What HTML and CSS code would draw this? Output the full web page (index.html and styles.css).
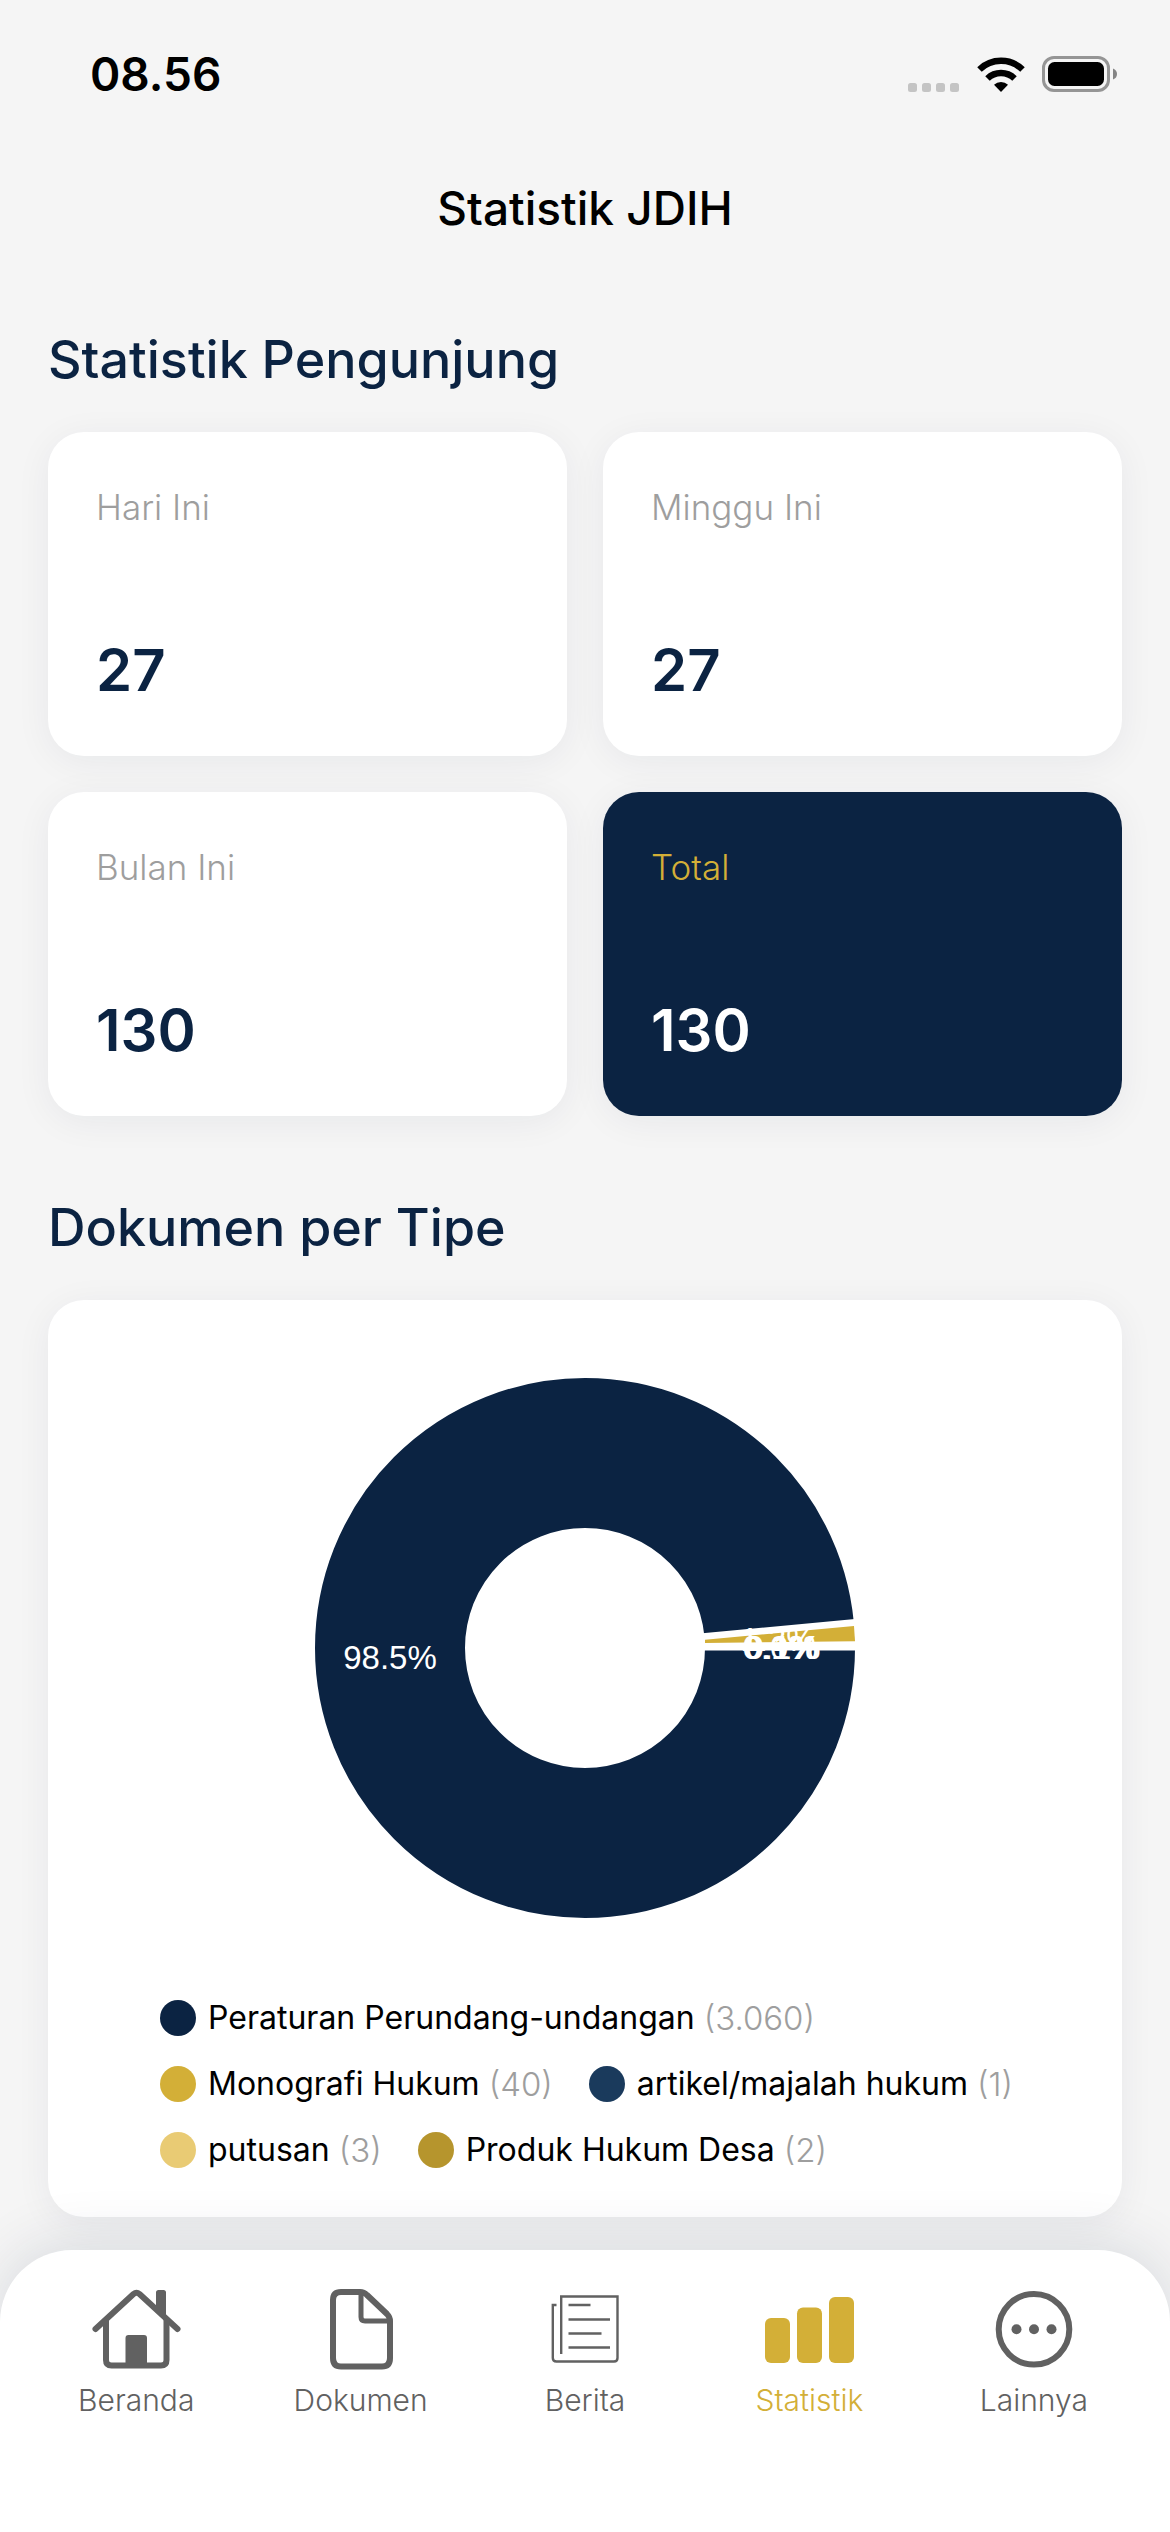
FILE: index.html
```html
<!DOCTYPE html>
<html lang="id">
<head>
    <meta charset="UTF-8">
    <meta name="viewport" content="width=device-width, initial-scale=1.0">
    <title>Statistik JDIH</title>
    <link rel="stylesheet" href="styles.css">
</head>
<body>
    <div class="status-bar">
        <span class="time">08.56</span>
        <div class="status-icons">
            <svg width="52" height="36" viewBox="0 0 52 36" fill="#c4c4c4">
                <rect x="0" y="27" width="9" height="9" rx="2.5"/>
                <rect x="14" y="27" width="9" height="9" rx="2.5"/>
                <rect x="28" y="27" width="9" height="9" rx="2.5"/>
                <rect x="42" y="27" width="9" height="9" rx="2.5"/>
            </svg>
            <svg width="48" height="36" viewBox="0 0 48 36">
                <path d="M2.5 13.5A31 31 0 0 1 45.500 13.500" fill="none" stroke="#000" stroke-width="6.500"/>
                <path d="M10.500 22.500A19.500 19.500 0 0 1 37.500 22.500" fill="none" stroke="#000" stroke-width="6.500"/>
                <path d="M24 36L17 28.800A10 10 0 0 1 31 28.800Z"/>
            </svg>
            <svg width="76" height="36" viewBox="0 0 76 36">
                <rect x="1.500" y="1.500" width="65" height="33" rx="10.500" fill="none" stroke="#959595" stroke-width="3"/>
                <rect x="6" y="6" width="56" height="24" rx="6.500"/>
                <path d="M71 12.500Q75 14 75 18T71 23.500Z" fill="#858585"/>
            </svg>
        </div>
    </div>

    <header class="app-header">
        <h1>Statistik JDIH</h1>
    </header>

    <main>
        <section>
            <h2>Statistik Pengunjung</h2>
            <div class="stats">
                <div class="card stat">
                    <span class="stat-label">Hari Ini</span>
                    <span class="stat-value">27</span>
                </div>
                <div class="card stat">
                    <span class="stat-label">Minggu Ini</span>
                    <span class="stat-value">27</span>
                </div>
                <div class="card stat">
                    <span class="stat-label">Bulan Ini</span>
                    <span class="stat-value">130</span>
                </div>
                <div class="card stat stat-total">
                    <span class="stat-label">Total</span>
                    <span class="stat-value">130</span>
                </div>
            </div>
        </section>

        <section>
            <h2>Dokumen per Tipe</h2>
            <div class="card chart-card">
                <svg class="donut" viewBox="-270 -270 540 540">
                    <circle r="195" fill="none" stroke="#0b2342" stroke-width="150"/>
                    <!-- gaps between the small slices -->
                    <path d="M112 -14.200L275 -29.500V2.500H112Z" fill="#fff"/>
                    <path d="M120 -8.300L269 -22L270 -6.700L120 -5Z" fill="#d3af37"/>
                    <text x="-195" y="21">98.5%</text>
                    <text x="193" y="3">1.3%</text>
                    <text x="195" y="11">0.0%</text>
                    <text x="196" y="11">0.1%</text>
                    <text x="198" y="11">0.1%</text>
                </svg>
                <ul class="legend">
                    <li><i class="dot navy"></i>Peraturan Perundang-undangan <span>(3.060)</span></li>
                    <li><i class="dot gold"></i>Monografi Hukum <span>(40)</span></li>
                    <li><i class="dot blue"></i>artikel/majalah hukum <span>(1)</span></li>
                    <li><i class="dot sand"></i>putusan <span>(3)</span></li>
                    <li><i class="dot bronze"></i>Produk Hukum Desa <span>(2)</span></li>
                </ul>
            </div>
        </section>
    </main>

    <nav class="tab-bar">
        <a href="#beranda">
            <svg width="96" height="88" viewBox="0 0 96 88" fill="none" stroke="currentColor" stroke-width="6" stroke-linecap="round" stroke-linejoin="round">
                <path d="M7.500 45L45.500 10Q48.500 7.500 51.500 10L89.500 45"/>
                <path d="M18 35V76Q18 81.500 23.500 81.500H73Q78.500 81.500 78.500 76V35" stroke-linecap="butt"/>
                <path d="M37.500 83V54Q37.500 51 40.500 51H56Q59 51 59 54V83ZM68 26V8.500Q68 6 70.500 6H75.500Q78 6 78 8.500V34Z" fill="currentColor" stroke="none"/>
            </svg>
            Beranda
        </a>
        <a href="#dokumen">
            <svg width="96" height="88" viewBox="0 0 96 88" fill="none" stroke="currentColor" stroke-width="6">
                <path d="M28 8H47Q51 8 54 11L74 30Q77 33 77 37V74Q77 82.500 69 82.500H28Q20 82.500 20 74V16Q20 8 28 8Z"/>
                <path d="M48 8V33Q48 37 52 37H77" stroke-width="5"/>
            </svg>
            Dokumen
        </a>
        <a href="#berita">
            <svg width="96" height="88" viewBox="0 0 96 88" fill="none" stroke="currentColor" stroke-width="2.400">
                <path d="M24.200 70V12.500H80.500V74Q80.500 77.500 77 77.500H19.500Q15.800 77.500 15.800 74V21H19.500"/>
                <path d="M31.500 21H53.500M31.500 35.500H73M31.500 49.500H64.500M31.500 63.500H73"/>
            </svg>
            Berita
        </a>
        <a href="#statistik" class="active">
            <svg width="96" height="88" viewBox="0 0 96 88" fill="currentColor">
                <rect x="4" y="34" width="25" height="45" rx="6"/>
                <rect x="36" y="23.500" width="25" height="55.500" rx="6"/>
                <rect x="68" y="13" width="25" height="66" rx="6"/>
            </svg>
            Statistik
        </a>
        <a href="#lainnya">
            <svg width="96" height="88" viewBox="0 0 96 88" fill="currentColor">
                <circle cx="48" cy="45.300" r="35.300" fill="none" stroke="currentColor" stroke-width="6"/>
                <circle cx="30.500" cy="45.300" r="5"/>
                <circle cx="48" cy="45.300" r="5"/>
                <circle cx="65.500" cy="45.300" r="5"/>
            </svg>
            Lainnya
        </a>
    </nav>
</body>
</html>
```

FILE: styles.css
```css
* {
    box-sizing: border-box;
}
body {
    margin: 0;
    min-height: 100vh;
    display: flex;
    flex-direction: column;
    font-family: Inter, "Liberation Sans", sans-serif;
    background: #f5f5f5;
    color: #000;
}
h1, h2, ul {
    margin: 0;
    padding: 0;
}

/* status bar + title */
.status-bar {
    display: flex;
    justify-content: space-between;
    align-items: center;
    height: 148px;
    padding: 0 52px 0 90px;
}
.time {
    font-size: 46px;
    font-weight: 600;
}
.status-icons {
    display: flex;
    gap: 17px;
}
.app-header {
    padding: 28px 48px;
    text-align: center;
}
h1 {
    font-size: 46px;
    line-height: 64px;
    font-weight: 500;
}

/* content */
main {
    padding: 48px 48px 33px;
}
section + section {
    margin-top: 68px;
}
h2 {
    margin-bottom: 28px;
    font-size: 52px;
    line-height: 88px;
    font-weight: 500;
    color: #0b2342;
}
.card {
    background: #fff;
    border-radius: 36px;
    box-shadow: 0 6px 36px rgba(11, 35, 66, 0.06);
}
.stats {
    display: grid;
    grid-template-columns: 1fr 1fr;
    gap: 36px;
}
.stat {
    display: flex;
    flex-direction: column;
    justify-content: space-between;
    height: 324px;
    padding: 48px;
}
.stat-label {
    font-size: 35px;
    line-height: 54px;
    font-weight: 300;
    color: #9e9e9e;
}
.stat-value {
    font-size: 58px;
    line-height: 76px;
    font-weight: 600;
    color: #0b2342;
}
.stat-total {
    background: #0b2342;
}
.stat-total .stat-label {
    color: #d3af37;
}
.stat-total .stat-value {
    color: #fff;
}

/* chart */
.chart-card {
    padding: 78px 0 46px;
}
.donut {
    display: block;
    width: 540px;
    margin: 0 auto 79px;
}
.donut text {
    font-family: "Liberation Sans", sans-serif;
    font-size: 33px;
    fill: #fff;
    text-anchor: middle;
}
.legend {
    display: flex;
    flex-wrap: wrap;
    gap: 24px 36px;
    padding: 0 84px 0 112px;
    list-style: none;
    font-size: 32px;
    line-height: 42px;
}
.legend li {
    display: flex;
    align-items: center;
    white-space: pre;
}
.legend span {
    font-size: 33px;
    font-weight: 300;
    color: #9e9e9e;
}
.dot {
    width: 36px;
    height: 36px;
    margin-right: 12px;
    border-radius: 50%;
}
.navy {
    background: #0b2342;
}
.gold {
    background: #d3af37;
}
.blue {
    background: #1a3a5c;
}
.sand {
    background: #e9cb74;
}
.bronze {
    background: #b6952d;
}

/* bottom navigation */
.tab-bar {
    position: relative;
    display: flex;
    margin-top: auto;
    padding: 34px 24px 114px;
    background: #fff;
    border-radius: 72px 72px 0 0;
    box-shadow: 0 -6px 60px rgba(11, 35, 66, 0.12);
}
.tab-bar a {
    flex: 1;
    display: flex;
    flex-direction: column;
    align-items: center;
    gap: 10px;
    font-size: 30px;
    line-height: 36px;
    font-weight: 300;
    color: #616161;
    text-decoration: none;
}
.tab-bar a.active {
    color: #d3af37;
}
```
